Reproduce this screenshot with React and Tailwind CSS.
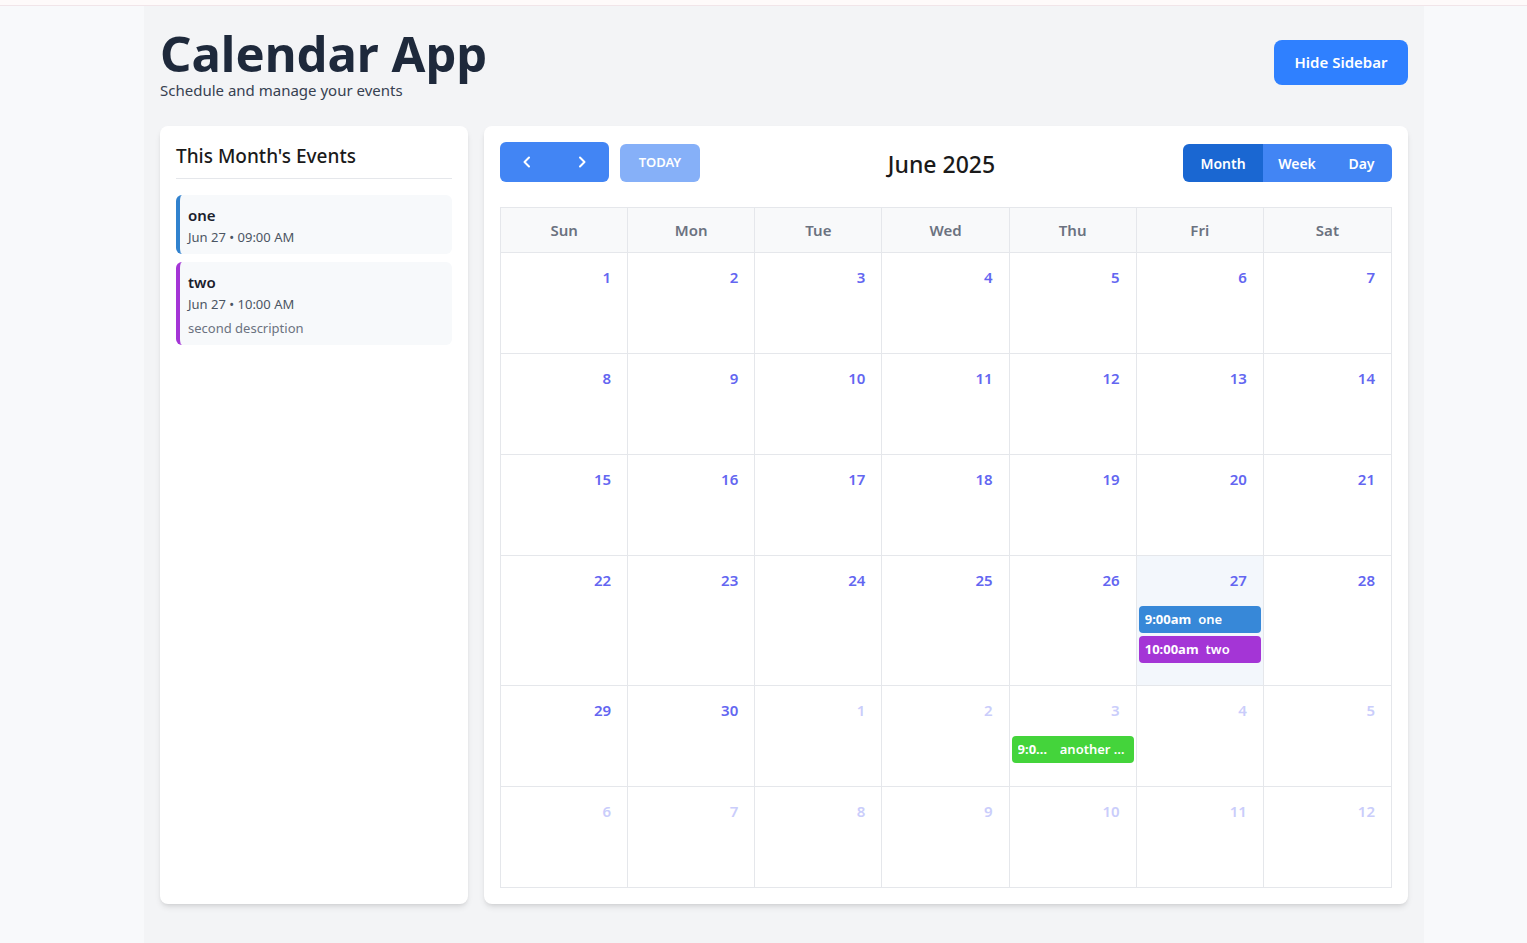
import React from "react";

const days = ["Sun", "Mon", "Tue", "Wed", "Thu", "Fri", "Sat"];

const weeks = [
  [1, 2, 3, 4, 5, 6, 7].map((d) => ({ d })),
  [8, 9, 10, 11, 12, 13, 14].map((d) => ({ d })),
  [15, 16, 17, 18, 19, 20, 21].map((d) => ({ d })),
  [22, 23, 24, 25, 26, 27, 28].map((d) => ({ d })),
  [
    { d: 29 },
    { d: 30 },
    { d: 1, o: true },
    { d: 2, o: true },
    { d: 3, o: true },
    { d: 4, o: true },
    { d: 5, o: true },
  ],
  [6, 7, 8, 9, 10, 11, 12].map((d) => ({ d, o: true })),
];

const cellEvents = {
  "3-5": [
    { time: "9:00am", title: "one", color: "bg-[#3788d8]" },
    { time: "10:00am", title: "two", color: "bg-[#a435d6]" },
  ],
  "4-4": [{ time: "9:00am", title: "another event", color: "bg-[#44d43b]" }],
};

function Chevron({ dir }) {
  return (
    <svg width="12" height="14" viewBox="0 0 12 14" fill="none">
      {dir === "left" ? (
        <polyline points="8,2.5 3.5,7 8,11.5" stroke="white" strokeWidth="2" strokeLinecap="round" strokeLinejoin="round" />
      ) : (
        <polyline points="4,2.5 8.5,7 4,11.5" stroke="white" strokeWidth="2" strokeLinecap="round" strokeLinejoin="round" />
      )}
    </svg>
  );
}

export default function App() {
  return (
    <div className="min-h-screen bg-[#f8f9fb]" style={{ fontFamily: '"Noto Sans", "Open Sans", sans-serif' }}>
      <div className="h-[6px] bg-[#fefafa] border-b border-[#f1e5e9]" />
      <div className="ml-[144px] w-[1280px] bg-[#f3f4f6] min-h-[937px] px-4 pt-[20px] pb-8">
        <div className="flex items-start justify-between">
          <div>
            <h1 className="text-[49px] leading-[54px] font-bold text-[#1e293b]">Calendar App</h1>
            <p className="text-[15px] leading-5 text-[#374151]">Schedule and manage your events</p>
          </div>
          <button className="mt-[14px] h-[45px] w-[134px] rounded-lg bg-[#2f80ff] text-white text-[15px] font-semibold">
            Hide Sidebar
          </button>
        </div>

        <div className="mt-[26px] flex gap-4 items-stretch">
          <aside className="w-[308px] shrink-0 rounded-lg bg-white p-4 shadow-md">
            <h2 className="text-[19px] leading-7 font-medium text-[#1a1a1a] pb-2 border-b border-[#e5e7eb]">
              This Month's Events
            </h2>
            <div className="mt-4 flex flex-col gap-[8px]">
              <div className="rounded-md border-l-4 border-[#3182ce] bg-[#f7f9fb] pl-2 pr-3 pt-2.5 pb-[7px]">
                <div className="text-[15px] leading-5 font-semibold text-[#1a202c]">one</div>
                <div className="mt-[2px] text-[13px] leading-5 text-[#4b5563]">Jun 27 • 09:00 AM</div>
              </div>
              <div className="rounded-md border-l-4 border-[#a435d6] bg-[#f7f9fb] pl-2 pr-3 pt-2.5 pb-[7px]">
                <div className="text-[15px] leading-5 font-semibold text-[#1a202c]">two</div>
                <div className="mt-[2px] text-[13px] leading-5 text-[#4b5563]">Jun 27 • 10:00 AM</div>
                <div className="mt-1 text-[13px] leading-5 text-[#6b7280]">second description</div>
              </div>
            </div>
          </aside>

          <section className="flex-1 rounded-lg bg-white p-4 shadow-md">
            <div className="flex items-center justify-between h-[40px]">
              <div className="flex items-center gap-[11px]">
                <div className="flex h-[40px] w-[109px] rounded-md bg-[#4285f4] overflow-hidden">
                  <button className="flex-1 flex items-center justify-center"><Chevron dir="left" /></button>
                  <button className="flex-1 flex items-center justify-center"><Chevron dir="right" /></button>
                </div>
                <button className="mt-[2px] h-[38px] w-[80px] rounded-md bg-[#86b0f8] text-white text-[13px] font-semibold uppercase">
                  Today
                </button>
              </div>
              <div className="mt-[4px] text-[23px] font-medium text-[#1a1a1a]">June 2025</div>
              <div className="mt-[2px] flex h-[38px] rounded-md overflow-hidden text-white text-[14px] font-semibold">
                <button className="w-[80px] bg-[#1a67d2]">Month</button>
                <button className="w-[68px] bg-[#4285f4]">Week</button>
                <button className="w-[61px] bg-[#4285f4]">Day</button>
              </div>
            </div>

            <div className="mt-[25px] border border-[#e5e7eb]">
              <div className="grid grid-cols-7 bg-[#f8f9fa] border-b border-[#e5e7eb]">
                {days.map((d, i) => (
                  <div
                    key={d}
                    className={`h-[44px] flex items-center justify-center text-[15px] font-semibold text-[#6b7280] ${i < 6 ? "border-r border-[#e5e7eb]" : ""}`}
                  >
                    {d}
                  </div>
                ))}
              </div>
              {weeks.map((w, wi) => (
                <div key={wi} className={`grid grid-cols-7 ${wi < 5 ? "border-b border-[#e5e7eb]" : ""}`}>
                  {w.map((c, ci) => {
                    const evs = cellEvents[`${wi}-${ci}`];
                    const today = wi === 3 && ci === 5;
                    return (
                      <div
                        key={ci}
                        className={`min-h-[100px] pt-3 ${evs ? "pb-[22px]" : ""} ${ci < 6 ? "border-r border-[#e5e7eb]" : ""} ${today ? "bg-[#f3f7fc]" : ""}`}
                      >
                        <div
                          className={`h-6 leading-6 text-right pr-4 text-[15px] font-semibold ${c.o ? "text-[#cacdfb]" : "text-[#6366f1]"}`}
                        >
                          {c.d}
                        </div>
                        {evs && (
                          <div className="mt-[14px] flex flex-col gap-[3px] px-[2px]">
                            {evs.map((e, k) => (
                              <div
                                key={k}
                                className={`${e.color} h-[27px] rounded-[4px] px-1.5 flex items-center gap-[7px] text-white text-[13px] overflow-hidden whitespace-nowrap`}
                              >
                                <span className="font-bold truncate">{e.time}</span>
                                <span className="font-semibold truncate">{e.title}</span>
                              </div>
                            ))}
                          </div>
                        )}
                      </div>
                    );
                  })}
                </div>
              ))}
            </div>
          </section>
        </div>
      </div>
    </div>
  );
}
